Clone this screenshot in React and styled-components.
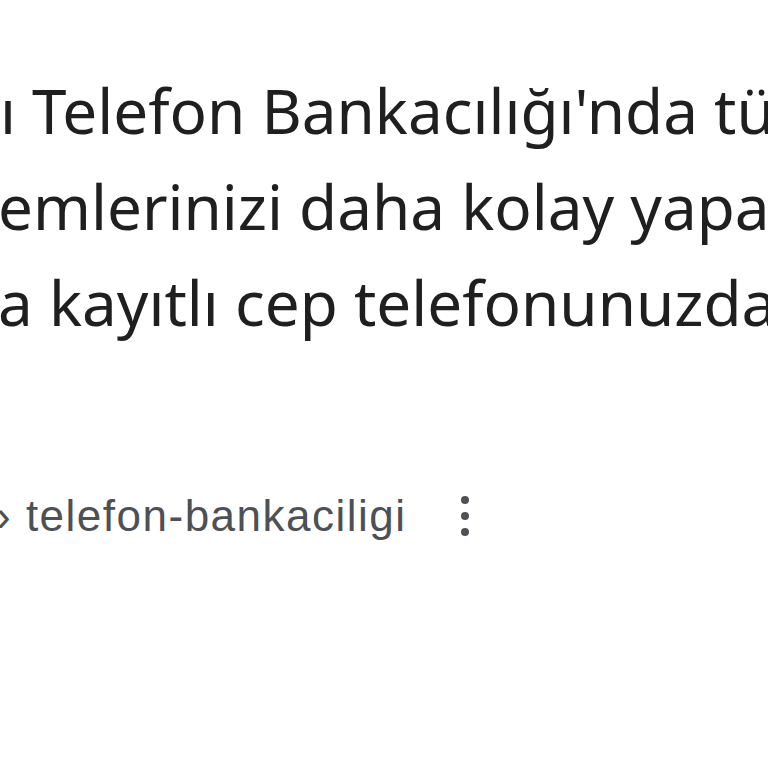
import * as React from "react";
import styled, { createGlobalStyle } from "styled-components";

const GlobalStyle = createGlobalStyle`
  html, body {
    margin: 0;
    padding: 0;
    background: #ffffff;
  }
`;

const Page = styled.div`
  width: 768px;
  height: 768px;
  overflow: hidden;
  background: #ffffff;
  padding-top: 62px;
  box-sizing: border-box;
`;

const Snippet = styled.div`
  font-family: "Noto Sans", "Open Sans", sans-serif;
  font-size: 62px;
  line-height: 96px;
  letter-spacing: 0;
  color: #1f1f1f;
`;

const Line = styled.div`
  white-space: nowrap;
  margin-left: ${(p) => p.$shift}px;
`;

const Crumb = styled.div`
  display: flex;
  align-items: center;
  height: 48px;
  margin-top: 142px;
  margin-left: -4px;
  font-family: "Liberation Sans", Arial, sans-serif;
  font-size: 44px;
  line-height: 48px;
  letter-spacing: 1.5px;
  color: #4d5156;
  white-space: nowrap;
`;

const Dots = styled.svg`
  margin-left: 52px;
  flex-shrink: 0;
`;

const lines = [
  { text: "ı Telefon Bankacılığı'nda tüm", shift: 0 },
  { text: "emlerinizi daha kolay yapabilirsiniz", shift: -2 },
  { text: "a kayıtlı cep telefonunuzdan", shift: -2 },
];

export default function App() {
  return (
    <>
      <GlobalStyle />
      <Page>
        <Snippet>
          {lines.map((l) => (
            <Line key={l.text} $shift={l.shift}>
              {l.text}
            </Line>
          ))}
        </Snippet>
        <Crumb>
          › telefon-bankaciligi
          <Dots width="12" height="44" viewBox="0 0 12 44">
            <circle cx="6" cy="6" r="4" fill="#4d5156" />
            <circle cx="6" cy="22" r="4" fill="#4d5156" />
            <circle cx="6" cy="38" r="4" fill="#4d5156" />
          </Dots>
        </Crumb>
      </Page>
    </>
  );
}
